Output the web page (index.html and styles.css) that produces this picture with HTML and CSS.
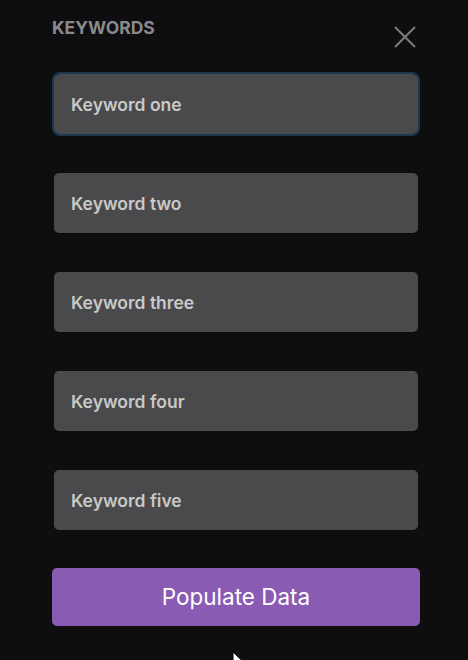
FILE: index.html
```html
<!DOCTYPE html>
<html lang="en">
<head>
<meta charset="utf-8">
<title>Keywords</title>
<link rel="stylesheet" href="styles.css">
</head>
<body>
<div class="panel">
  <div class="header">
    <h2 class="title">KEYWORDS</h2>
    <button class="close" aria-label="Close">
      <svg width="22" height="22" viewBox="0 0 22 22"><path d="M1 1 L21 21 M21 1 L1 21" stroke="#7b7b7d" stroke-width="2" fill="none"/></svg>
    </button>
  </div>
  <div class="list">
    <div class="field focused">Keyword one</div>
    <div class="field">Keyword two</div>
    <div class="field">Keyword three</div>
    <div class="field">Keyword four</div>
    <div class="field">Keyword five</div>
  </div>
  <button class="populate">Populate Data</button>
</div>
<svg class="cursor" width="14" height="20" viewBox="0 0 14 20"><path d="M1 1 L1 16 L4.5 12.5 L7 18 L9.5 17 L7 11.5 L12 11.5 Z" fill="#fff" stroke="#000" stroke-width="1"/></svg>
</body>
</html>
```
FILE: styles.css
```css
html, body {
  margin: 0;
  padding: 0;
  background: #0e0e10;
  height: 100%;
  overflow: hidden;
}
body {
  font-family: Inter, "Noto Sans", sans-serif;
  position: relative;
}
.panel {
  width: 368px;
  margin-left: 52px;
  display: flex;
  flex-direction: column;
}
.header {
  height: 74px;
  display: flex;
  justify-content: space-between;
  align-items: flex-start;
}
.title {
  margin: 17px 0 0;
  font-size: 17.5px;
  font-weight: 700;
  color: #8a8a8c;
  letter-spacing: 0;
}
.close {
  margin: 26px 4px 0 0;
  padding: 0;
  border: 0;
  background: none;
  width: 22px;
  height: 22px;
  display: flex;
}
.list {
  display: flex;
  flex-direction: column;
  gap: 39px;
  padding: 0 2px;
}
.field {
  height: 60px;
  background: #4a4a4c;
  border-radius: 5px;
  box-sizing: border-box;
  padding-left: 17px;
  padding-top: 1px;
  display: flex;
  align-items: center;
  font-size: 17.5px;
  font-weight: 600;
  color: #c9c9c9;
}
.field.focused {
  outline: 2px solid #1b3552;
  outline-offset: 0;
  border-radius: 6px;
}
.populate {
  margin-top: 38px;
  height: 58px;
  border: 0;
  border-radius: 5px;
  background: #8a5bb3;
  color: #ffffff;
  font-family: Inter, "Noto Sans", sans-serif;
  font-size: 22.5px;
  font-weight: 400;
  padding: 0 0 2px;
  cursor: pointer;
}
.cursor {
  position: absolute;
  left: 232px;
  top: 651px;
}
```
